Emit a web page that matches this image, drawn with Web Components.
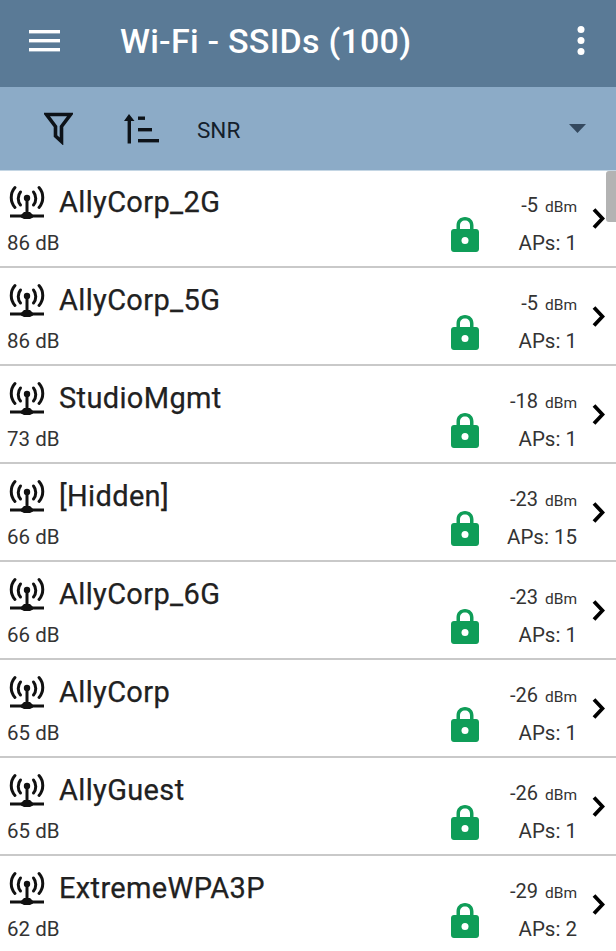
<!DOCTYPE html>
<html>
<head>
<meta charset="utf-8">
<title>Wi-Fi - SSIDs</title>
<style>
    html, body { margin: 0; padding: 0; }
    body { width: 616px; height: 951px; overflow: hidden; background: #fff; font-family: Roboto, sans-serif; position: relative; }
</style>
</head>
<body>
<app-bar title="Wi-Fi - SSIDs (100)"></app-bar>
<sort-bar field="SNR"></sort-bar>
<ssid-list>
    <ssid-row name="AllyCorp_2G" snr="86 dB" rssi="-5" aps="1"></ssid-row>
    <ssid-row name="AllyCorp_5G" snr="86 dB" rssi="-5" aps="1"></ssid-row>
    <ssid-row name="StudioMgmt" snr="73 dB" rssi="-18" aps="1"></ssid-row>
    <ssid-row name="[Hidden]" snr="66 dB" rssi="-23" aps="15"></ssid-row>
    <ssid-row name="AllyCorp_6G" snr="66 dB" rssi="-23" aps="1"></ssid-row>
    <ssid-row name="AllyCorp" snr="65 dB" rssi="-26" aps="1"></ssid-row>
    <ssid-row name="AllyGuest" snr="65 dB" rssi="-26" aps="1"></ssid-row>
    <ssid-row name="ExtremeWPA3P" snr="62 dB" rssi="-29" aps="2"></ssid-row>
</ssid-list>

<script>
class AppBar extends HTMLElement {
    constructor() {
        super();
        this.shadowDOM = this.attachShadow({mode: "open"});
    }
    connectedCallback() {
        this.shadowDOM.innerHTML = `
        <style>
        :host {
            display: flex;
            align-items: center;
            height: 87px;
            box-sizing: border-box;
            padding: 0 0 6px 29px;
            background: #5a7a96;
            color: #fff;
        }
        svg { display: block; }
        h1 {
            flex: 1;
            margin: 0 0 0 60px;
            font: 500 34px Roboto, sans-serif;
            letter-spacing: 0.25px;
            white-space: nowrap;
        }
        .more { margin-right: 31px; }
        </style>
        <svg width="31" height="22" viewBox="0 0 31 22" fill="#fff">
            <rect y="0" width="31" height="3.4"/>
            <rect y="9" width="31" height="3.4"/>
            <rect y="18" width="31" height="3.4"/>
        </svg>
        <h1>${this.getAttribute("title")}</h1>
        <svg class="more" width="8" height="29" viewBox="0 0 8 29" fill="#fff">
            <circle cx="4" cy="3.5" r="3.5"/>
            <circle cx="4" cy="14.5" r="3.5"/>
            <circle cx="4" cy="25.5" r="3.5"/>
        </svg>`;
    }
}

class SortBar extends HTMLElement {
    constructor() {
        super();
        this.shadowDOM = this.attachShadow({mode: "open"});
    }
    connectedCallback() {
        this.shadowDOM.innerHTML = `
        <style>
        :host {
            display: flex;
            align-items: center;
            height: 83px;
            box-sizing: border-box;
            padding: 0 30px 0 44px;
            background: #8cabc7;
            color: #14202c;
        }
        svg { display: block; }
        .sort { margin-left: 50px; }
        span {
            flex: 1;
            margin: 3px 0 0 38px;
            font: 400 22.5px Roboto, sans-serif;
        }
        </style>
        <svg width="29" height="33" viewBox="0 0 29 33" fill="none" stroke="#0d1218" stroke-width="3.6" stroke-linejoin="miter">
            <path d="M2.5 2.5H26.5L17.5 14.5V29.5L11.5 24V14.5Z"/>
        </svg>
        <svg class="sort" width="36" height="30" viewBox="0 0 36 30" fill="#0d1218">
            <path d="M6 0L11.5 7H8V29.5H4.6V7H1Z"/>
            <rect x="15" y="2.5" width="7" height="3.4"/>
            <rect x="15" y="14" width="14" height="3.4"/>
            <rect x="15" y="25" width="21" height="3.4"/>
        </svg>
        <span>${this.getAttribute("field")}</span>
        <svg width="17" height="9" viewBox="0 0 17 9" fill="#34495f">
            <path d="M0 0H17L8.5 9Z"/>
        </svg>`;
    }
}

class SsidList extends HTMLElement {
    constructor() {
        super();
        this.shadowDOM = this.attachShadow({mode: "open"});
    }
    connectedCallback() {
        this.shadowDOM.innerHTML = `
        <style>
        :host {
            display: block;
            position: relative;
            box-shadow: inset 0 1px 0 #c4d6e4;
        }
        .thumb {
            position: absolute;
            top: 1px;
            right: 0;
            width: 10px;
            height: 51px;
            border-radius: 3px 0 0 3px;
            background: #b3b3b3;
        }
        </style>
        <slot></slot>
        <div class="thumb"></div>`;
    }
}

class SsidRow extends HTMLElement {
    constructor() {
        super();
        this.shadowDOM = this.attachShadow({mode: "open"});
    }
    connectedCallback() {
        this.shadowDOM.innerHTML = `
        <style>
        :host {
            display: flex;
            height: 98px;
            box-sizing: border-box;
            border-bottom: 2px solid #c9c9c9;
            color: #212121;
        }
        svg { display: block; }
        .info { flex: 1; min-width: 0; padding: 15px 0 0 7px; }
        .title { display: flex; align-items: center; height: 34px; }
        .name { margin-left: 13px; font: 400 29px/34px Roboto, sans-serif; letter-spacing: 0.35px; white-space: nowrap; -webkit-text-stroke: 0.25px #212121; }
        .snr { margin-top: 12px; font: 400 20.5px/24px Roboto, sans-serif; color: #333; }
        .lock { margin: 46px 0 0 0; }
        .stats { width: 98px; padding-top: 22px; text-align: right; color: #333; }
        .rssi { font: 400 20px/26px Roboto, sans-serif; }
        .rssi small { font-size: 15.5px; margin-left: 2px; }
        .aps { margin-top: 11px; font: 400 20.5px/24px Roboto, sans-serif; }
        .chevron { margin: 38px 11px 0 15px; }
        </style>
        <div class="info">
            <div class="title">
                <svg width="39" height="34" viewBox="0 0 39 34" fill="none" stroke="#111" stroke-width="3" stroke-linecap="round">
                    <circle cx="20" cy="13" r="3.2" fill="#111" stroke="none"/>
                    <path d="M13.5 7C10.5 10.5 10.5 16.5 13.5 20"/>
                    <path d="M26.5 7C29.5 10.5 29.5 16.5 26.5 20"/>
                    <path d="M8 2.5C3 8 3 17 8 22.5"/>
                    <path d="M32 2.5C37 8 37 17 32 22.5"/>
                    <path d="M20 14V29" stroke-linecap="butt" stroke-width="3"/>
                    <path d="M3 31H37" stroke-linecap="butt" stroke-width="3"/>
                    <path d="M17 27H23L26 30V32.5L23 34H17L14 32.5V30Z" fill="#111" stroke="none"/>
                </svg>
                <span class="name">${this.getAttribute("name")}</span>
            </div>
            <div class="snr">${this.getAttribute("snr")}</div>
        </div>
        <svg class="lock" width="28" height="36" viewBox="0 0 28 36">
            <path fill="#0f9d58" d="M3 13H5.5V9.5C5.5 4.5 9 1 14 1S22.5 4.5 22.5 9.5V13H25C26.7 13 28 14.3 28 16V33C28 34.7 26.7 36 25 36H3C1.3 36 0 34.7 0 33V16C0 14.3 1.3 13 3 13ZM9 13H19V9.5C19 6.5 17 4.5 14 4.5S9 6.5 9 9.5Z"/>
            <circle cx="14" cy="24.5" r="3.5" fill="#fff"/>
        </svg>
        <div class="stats">
            <div class="rssi">${this.getAttribute("rssi")} <small>dBm</small></div>
            <div class="aps">APs: ${this.getAttribute("aps")}</div>
        </div>
        <svg class="chevron" width="13" height="21" viewBox="0 0 13 21" fill="none" stroke="#000" stroke-width="3.8">
            <path d="M2 1.5L10.5 10.5L2 19.5"/>
        </svg>`;
    }
}

customElements.define("app-bar", AppBar);
customElements.define("sort-bar", SortBar);
customElements.define("ssid-list", SsidList);
customElements.define("ssid-row", SsidRow);
</script>
</body>
</html>
